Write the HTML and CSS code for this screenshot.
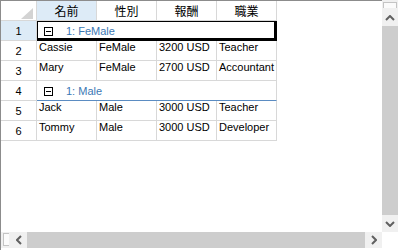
FILE: index.html
```html
<!DOCTYPE html>
<html lang="en">
<head>
    <meta charset="UTF-8">
    <title>Grouped Grid</title>
    <link rel="stylesheet" href="styles.css">
</head>
<body>
    <div class="grid-ctl">
        <div class="sheet">
            <div class="row head">
                <div class="rh corner">
                    <svg width="12" height="11" viewBox="0 0 12 11"><polygon points="12,0 12,11 0,11" fill="#d3d3d3"/></svg>
                </div>
                <div class="cell hc sel">名前</div>
                <div class="cell hc">性別</div>
                <div class="cell hc">報酬</div>
                <div class="cell hc">職業</div>
            </div>

            <div class="row">
                <div class="rh sel">1</div>
                <div class="group current">
                    <span class="toggle"></span>
                    <span class="caption">1: FeMale</span>
                </div>
            </div>
            <div class="row">
                <div class="rh">2</div>
                <div class="cell">Cassie</div>
                <div class="cell">FeMale</div>
                <div class="cell">3200 USD</div>
                <div class="cell">Teacher</div>
            </div>
            <div class="row">
                <div class="rh">3</div>
                <div class="cell">Mary</div>
                <div class="cell">FeMale</div>
                <div class="cell">2700 USD</div>
                <div class="cell">Accountant</div>
            </div>

            <div class="row">
                <div class="rh">4</div>
                <div class="group">
                    <span class="toggle"></span>
                    <span class="caption">1: Male</span>
                </div>
            </div>
            <div class="row">
                <div class="rh">5</div>
                <div class="cell">Jack</div>
                <div class="cell">Male</div>
                <div class="cell">3000 USD</div>
                <div class="cell">Teacher</div>
            </div>
            <div class="row">
                <div class="rh">6</div>
                <div class="cell">Tommy</div>
                <div class="cell">Male</div>
                <div class="cell">3000 USD</div>
                <div class="cell">Developer</div>
            </div>
        </div>

        <div class="vscroll">
            <div class="split"></div>
            <div class="btn">
                <svg width="10" height="6" viewBox="0 0 10 6"><polyline points="1,5 5,1 9,5" fill="none" stroke="#606060" stroke-width="2"/></svg>
            </div>
            <div class="track"></div>
            <div class="btn">
                <svg width="10" height="6" viewBox="0 0 10 6"><polyline points="1,1 5,5 9,1" fill="none" stroke="#606060" stroke-width="2"/></svg>
            </div>
        </div>

        <div class="hscroll">
            <div class="split"></div>
            <div class="btn">
                <svg width="6" height="10" viewBox="0 0 6 10"><polyline points="5,1 1,5 5,9" fill="none" stroke="#606060" stroke-width="2"/></svg>
            </div>
            <div class="track"></div>
            <div class="btn">
                <svg width="6" height="10" viewBox="0 0 6 10"><polyline points="1,1 5,5 1,9" fill="none" stroke="#606060" stroke-width="2"/></svg>
            </div>
        </div>

        <div class="sb-corner"></div>
    </div>
</body>
</html>
```

FILE: styles.css
```css
body {
    margin: 0;
    background-color: #ffffff;
    font-family: "Liberation Sans", Arial, sans-serif;
    font-size: 11px;
}
.grid-ctl {
    width: 400px;
    height: 250px;
    box-sizing: border-box;
    border-left: 1px solid #8c8c8c;
    padding: 0 2px 2px 0;
    display: grid;
    grid-template-columns: 1fr 16px;
    grid-template-rows: 1fr 16px;
    background-color: #ffffff;
}
.sheet {
    border-top: 1px solid #8c8c8c;
    overflow: hidden;
}
.row {
    display: flex;
    height: 20px;
}
.rh {
    width: 36px;
    box-sizing: border-box;
    border-right: 1px solid #d8d8d8;
    border-bottom: 1px solid #d8d8d8;
    display: flex;
    align-items: center;
    justify-content: center;
    padding-top: 1px;
    color: #000000;
}
.rh.corner {
    justify-content: flex-end;
    align-items: flex-end;
    padding: 0 3px 1px 0;
}
.sel {
    background-color: #ddebf7;
}
.cell {
    width: 60px;
    box-sizing: border-box;
    border-right: 1px solid #d8d8d8;
    border-bottom: 1px solid #d8d8d8;
    padding-left: 2px;
    line-height: 13px;
    white-space: nowrap;
    overflow: hidden;
    color: #000000;
}
.cell.hc {
    padding: 1px 0 0 0;
    line-height: 18px;
    text-align: center;
    font-family: "Noto Sans CJK JP", sans-serif;
    font-size: 12px;
}
.group {
    width: 240px;
    box-sizing: border-box;
    border-right: 1px solid #d8d8d8;
    border-bottom: 1px solid #5b8cc2;
    display: flex;
    align-items: center;
    padding: 1px 0 0 7px;
}
.group.current {
    border-color: #000000;
    box-shadow: inset 1px 1px 0 #000000, inset -2px -2px 0 #000000;
}
.toggle {
    width: 9px;
    height: 9px;
    box-sizing: border-box;
    border: 1px solid #000000;
    display: flex;
    align-items: center;
    justify-content: center;
}
.toggle::after {
    content: "";
    width: 5px;
    height: 1px;
    background-color: #000000;
}
.caption {
    margin-left: 13px;
    color: #3b78b4;
}
.vscroll {
    display: flex;
    flex-direction: column;
    background-color: #f0f0f0;
}
.vscroll .split {
    height: 5px;
    margin: 2px 1px 1px 1px;
    border: 1px solid #c4c4c4;
    border-bottom-width: 0;
    background-color: #fbfbfb;
}
.vscroll .btn {
    height: 17px;
}
.hscroll {
    display: flex;
    background-color: #f0f0f0;
}
.hscroll .split {
    width: 5px;
    margin: 1px 1px 2px 2px;
    border: 1px solid #c4c4c4;
    border-right-width: 0;
    background-color: #fbfbfb;
}
.hscroll .btn {
    width: 17px;
}
.btn {
    display: flex;
    align-items: center;
    justify-content: center;
}
.track {
    flex: 1;
    background-color: #cdcdcd;
}
.sb-corner {
    background-color: #ffffff;
}
```
